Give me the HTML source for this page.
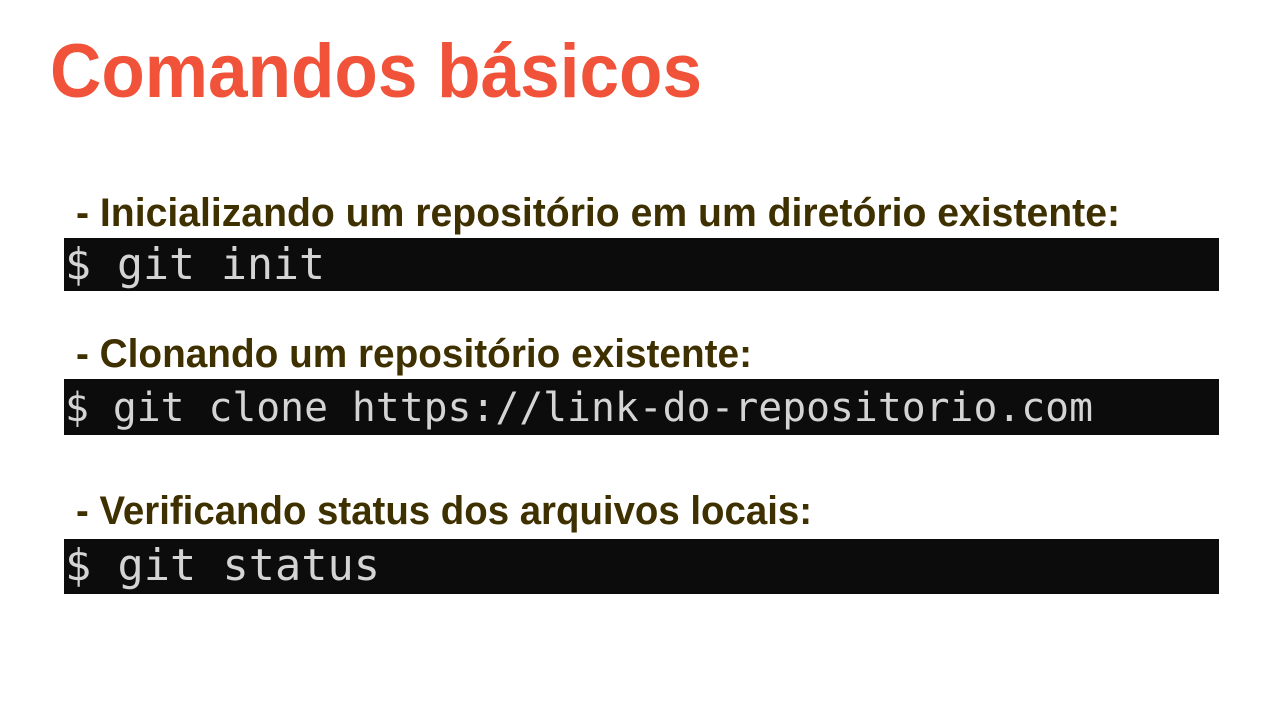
<!DOCTYPE html>
<html><head><meta charset="utf-8"><style>
html,body{margin:0;padding:0;background:#fff;width:1280px;height:720px;overflow:hidden}
</style></head><body>
<svg width="1280" height="720" xmlns="http://www.w3.org/2000/svg">
<rect width="1280" height="720" fill="#fff"/>
<text x="50" y="97" font-family="Liberation Sans, sans-serif" font-weight="bold" font-size="76" fill="#F0533A" textLength="652" lengthAdjust="spacingAndGlyphs">Comandos básicos</text>
<g font-family="Liberation Sans, sans-serif" font-weight="bold" font-size="40" fill="#3F3000">
<text x="76" y="226" textLength="1044" lengthAdjust="spacingAndGlyphs">- Inicializando um repositório em um diretório existente:</text>
<text x="76" y="367" textLength="676" lengthAdjust="spacingAndGlyphs">- Clonando um repositório existente:</text>
<text x="76" y="524" textLength="736" lengthAdjust="spacingAndGlyphs">- Verificando status dos arquivos locais:</text>
</g>
<rect x="64" y="238" width="1155" height="53" fill="#0C0C0C"/>
<rect x="64" y="379" width="1155" height="56" fill="#0C0C0C"/>
<rect x="64" y="539" width="1155" height="55" fill="#0C0C0C"/>
<g font-family="DejaVu Sans Mono, monospace" fill="#D4D4D4">
<text x="65" y="279" font-size="44" textLength="260" lengthAdjust="spacingAndGlyphs">$ git init</text>
<text x="65" y="421" font-size="40" textLength="1028" lengthAdjust="spacingAndGlyphs">$ git clone https://link-do-repositorio.com</text>
<text x="65" y="580" font-size="44" textLength="315" lengthAdjust="spacingAndGlyphs">$ git status</text>
</g>
</svg>
</body></html>
